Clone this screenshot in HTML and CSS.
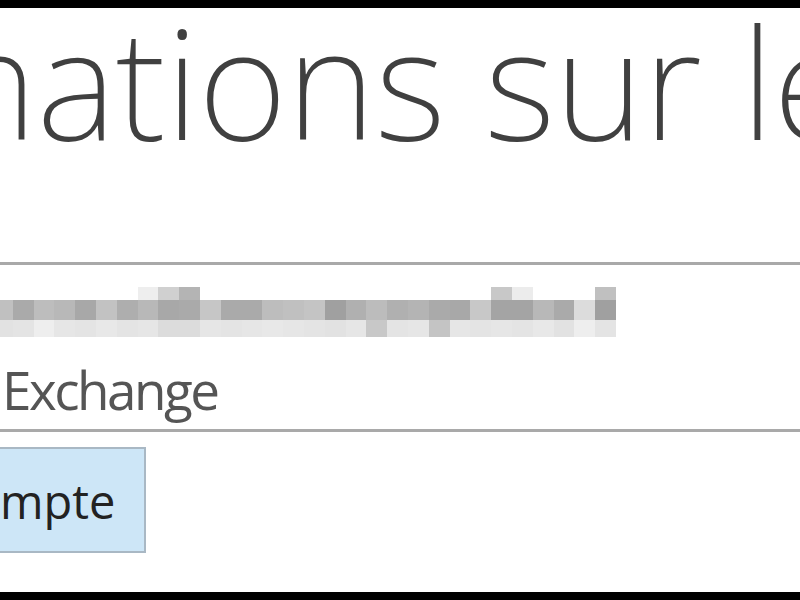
FILE: index.html
```html
<!DOCTYPE html>
<html lang="fr">
<head>
    <meta charset="UTF-8">
    <meta name="viewport" content="width=device-width, initial-scale=1.0">
    <title>Informations sur le compte</title>
    <link rel="stylesheet" href="styles.css">
</head>
<body>
    <div class="frame-bar"></div>
    <main class="pane">
        <h1 class="title">Informations sur le compte</h1>
        <hr class="rule">
        <section class="account">
            <div class="mosaic" id="mosaic"></div>
            <div class="account-type">Exchange</div>
        </section>
        <hr class="rule">
        <div class="actions">
            <button class="add-account">Ajouter un compte</button>
        </div>
    </main>
    <div class="frame-bar"></div>

    <script>
        // pixelated e-mail address, one gray level per block
        const rows = [
            ['ff','ff','ff','ff','ff','ff','ff','ee','d0','b4','ff','ff','ff','ff','ff','ff','ff','ff','ff','ff','ff','ff','ff','ff','c8','ec','ff','ff','ff','c0'],
            ['c0','aa','bd','b8','a8','c2','ae','b8','a8','aa','c6','aa','aa','bd','c0','c4','a0','b0','bc','b0','b4','aa','a8','c8','a4','a4','b8','aa','dc','a0'],
            ['e2','e4','ee','e6','e4','e8','e4','e6','dc','dc','e6','e4','e6','e8','e6','e4','e2','e6','c8','e4','e6','c4','e6','e4','e6','e4','e8','e2','ee','e4']
        ];

        const mosaic = document.getElementById('mosaic');

        rows.forEach(row => {
            row.forEach(level => {
                const cell = document.createElement('span');
                cell.style.backgroundColor = '#' + level + level + level;
                mosaic.appendChild(cell);
            });
        });
    </script>
</body>
</html>
```

FILE: styles.css
```css
html, body {
    margin: 0;
    height: 600px;
    overflow: hidden;
    background: white;
}

body {
    display: flex;
    flex-direction: column;
    font-family: "Open Sans", "Noto Sans", sans-serif;
}

.frame-bar {
    height: 8px;
    background: black;
    flex: none;
}

.pane {
    flex: 1;
    display: flex;
    flex-direction: column;
    overflow: hidden;
}

.title {
    height: 254px;
    margin: 0 0 0 -419px;
    font-family: "Noto Sans", "Open Sans", sans-serif;
    font-size: 153px;
    font-weight: 200;
    line-height: 145px;
    letter-spacing: -0.5px;
    color: #404040;
    white-space: nowrap;
    flex: none;
}

.rule {
    height: 3px;
    margin: 0;
    border: none;
    background: #a9a9a9;
    flex: none;
}

.account {
    height: 164px;
    flex: none;
}

.mosaic {
    display: grid;
    grid-template-columns: repeat(30, 20.8px);
    grid-template-rows: 13px 20px 17px;
    margin: 22px 0 0 -8px;
}

.account-type {
    margin: 26px 0 0 2px;
    font-size: 53px;
    line-height: 53px;
    letter-spacing: -2.5px;
    color: #555;
    white-space: nowrap;
}

.actions {
    flex: 1;
    padding-top: 15px;
}

.add-account {
    margin-left: -316px;
    padding: 29px 29px 26px 20px;
    font-family: "Open Sans", "Noto Sans", sans-serif;
    font-size: 47px;
    line-height: 47px;
    color: #222;
    background: #cde6f7;
    border: 2px solid #a9b8c4;
    border-radius: 0;
    white-space: nowrap;
}
```
